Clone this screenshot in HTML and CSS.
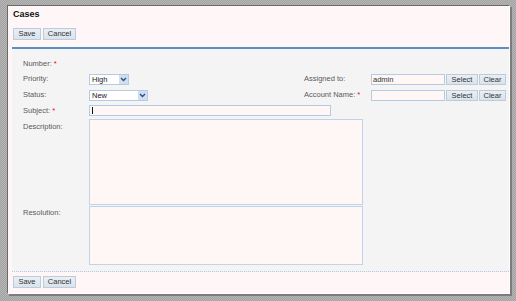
FILE: index.html
```html
<!DOCTYPE html>
<html>
<head>
<meta charset="utf-8">
<link rel="stylesheet" href="styles.css">
</head>
<body>
<div class="panel">
  <div class="header">
    <div class="title">Cases</div>
    <div class="btns top-btns">
      <button class="btn w-save">Save</button>
      <button class="btn w-cancel">Cancel</button>
    </div>
  </div>
  <div class="form">
    <div class="label r1">Number: <span class="req">*</span></div>

    <div class="label r2">Priority:</div>
    <div class="ctl r2"><div class="sel w-high"><span class="sel-text">High</span><span class="arrow"><svg width="7" height="5" viewBox="0 0 7 5"><path d="M1 1 L3.5 3.5 L6 1" fill="none" stroke="#2d4e8a" stroke-width="1.4"/></svg></span></div></div>
    <div class="label rl r2">Assigned to:</div>
    <div class="ctl r2 pick"><div class="field w-pick">admin</div><button class="btn w-select">Select</button><button class="btn w-clear">Clear</button></div>

    <div class="label r3">Status:</div>
    <div class="ctl r3"><div class="sel w-status"><span class="sel-text">New</span><span class="arrow"><svg width="7" height="5" viewBox="0 0 7 5"><path d="M1 1 L3.5 3.5 L6 1" fill="none" stroke="#2d4e8a" stroke-width="1.4"/></svg></span></div></div>
    <div class="label rl r3">Account Name: <span class="req">*</span></div>
    <div class="ctl r3 pick"><div class="field w-pick"></div><button class="btn w-select">Select</button><button class="btn w-clear">Clear</button></div>

    <div class="label r4">Subject: <span class="req">*</span></div>
    <div class="ctl r4 wide"><div class="field w-subject"><span class="caret"></span></div></div>

    <div class="label r5 top">Description:</div>
    <div class="ctl r5 wide top"><div class="area h-desc"></div></div>

    <div class="label r6 top res">Resolution:</div>
    <div class="ctl r6 wide top"><div class="area h-res"></div></div>
  </div>
  <div class="btns bottom-btns">
    <button class="btn w-save">Save</button>
    <button class="btn w-cancel">Cancel</button>
  </div>
</div>
</body>
</html>
```
FILE: styles.css
```css
html, body {
  margin: 0;
  padding: 0;
}
body {
  width: 516px;
  height: 301px;
  overflow: hidden;
  background: repeating-conic-gradient(#a2a2a2 0 25%, #b6b6b6 0 50%) 0 0 / 2px 2px;
  font-family: "Liberation Sans", Arial, sans-serif;
  font-size: 7.5px;
  color: #5a5a5a;
  padding-top: 5px;
  box-sizing: border-box;
}
.panel {
  margin-left: 7px;
  width: 503px;
  box-sizing: border-box;
  background: #fff7f7;
  border-top: 1px solid #6a6a6a;
  border-left: 1px solid #6a6a6a;
  border-right: 1px solid #fdfdfd;
  border-bottom: 1px solid #fdfdfd;
  box-shadow: 2px 2px 0 #7c7c7c;
  padding: 3px 0 5px 0;
}
.header {
  padding-left: 5px;
}
.title {
  font-size: 9px;
  font-weight: bold;
  color: #111;
  line-height: 11px;
  height: 11px;
}
.btns {
  display: flex;
  gap: 2px;
}
.top-btns {
  margin-top: 8px;
  margin-bottom: 7px;
}
.bottom-btns {
  margin-top: 4px;
  padding-left: 5px;
}
.btn {
  font-family: "Liberation Sans", Arial, sans-serif;
  font-size: 7.5px;
  color: #333;
  height: 12px;
  padding: 0;
  margin: 0;
  line-height: 10px;
  background: linear-gradient(#e9eff5, #d9e3ec);
  border: 1px solid #bfcbd8;
  border-radius: 0;
  text-align: center;
}
.w-save { width: 28px; }
.w-cancel { width: 33px; }
.w-select { width: 32px; height: 11px; }
.w-clear { width: 27px; height: 11px; }
.form {
  margin-left: 4px;
  border-top: 2px solid #5b8fc8;
  background: #f5f4f4;
  border-bottom: 1px dotted #b4c8e0;
  padding: 10px 0 5px 11px;
  display: grid;
  grid-template-columns: 66px 215px 67px 1fr;
  grid-template-rows: 12px 16px 16px 15px 88px 60px;
  align-items: center;
}
.label { grid-column: 1; line-height: 10px; white-space: nowrap; }
.label.rl { grid-column: 3; }
.ctl { grid-column: 2; display: flex; align-items: center; }
.ctl.pick { grid-column: 4; gap: 1px; }
.ctl.wide { grid-column: 2 / 5; }
.r1 { grid-row: 1; align-self: start; }
.r2 { grid-row: 2; }
.r3 { grid-row: 3; }
.r4 { grid-row: 4; }
.r5 { grid-row: 5; }
.r6 { grid-row: 6; }
.top { align-self: start; }
.label.r5 { padding-top: 4px; }
.label.res { padding-top: 2px; }
.ctl.r5 { padding-top: 1px; }
.req { color: #e01010; }
.sel {
  height: 11px;
  box-sizing: border-box;
  border: 1px solid #b5cbe3;
  background: #fff;
  display: flex;
  align-items: stretch;
  color: #222;
}
.w-high { width: 40px; }
.w-status { width: 59px; }
.sel-text {
  flex: 1;
  padding-left: 2px;
  line-height: 9px;
}
.arrow {
  width: 9px;
  background: #cfdff0;
  display: flex;
  align-items: center;
  justify-content: center;
}
.field {
  height: 11px;
  box-sizing: border-box;
  border: 1px solid #b5cbe3;
  background: #fff6f6;
  color: #333;
  line-height: 9px;
  padding-left: 1px;
  display: flex;
  align-items: center;
}
.w-pick { width: 74px; }
.w-subject { width: 242px; }
.caret {
  display: block;
  width: 1px;
  height: 7px;
  margin-left: 1px;
  background: #111;
}
.area {
  width: 274px;
  box-sizing: border-box;
  border: 1px solid #c0d3e8;
  background: #fff6f6;
}
.h-desc { height: 86px; }
.h-res { height: 59px; }
```
